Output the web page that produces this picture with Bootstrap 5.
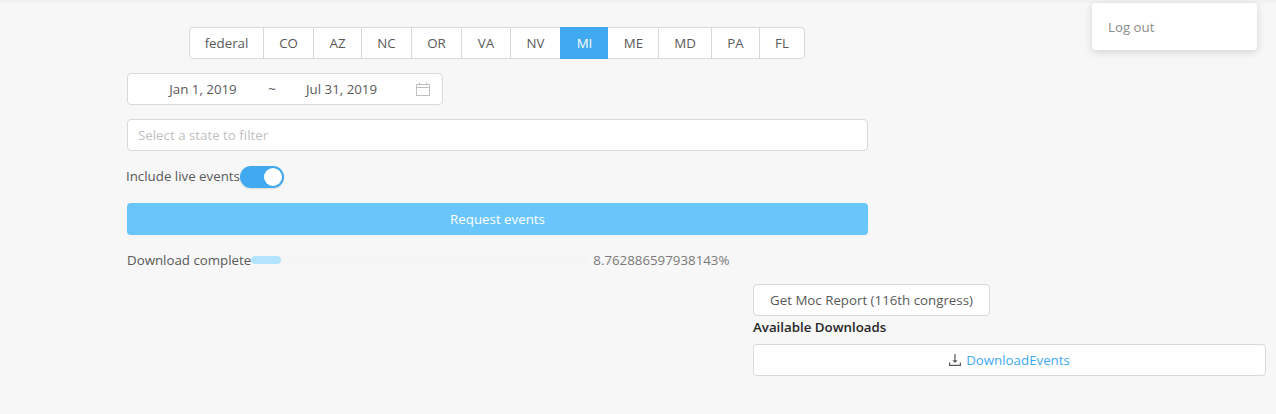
<!DOCTYPE html>
<html lang="en">
<head>
<meta charset="utf-8">
<title>Events</title>
<link rel="stylesheet" href="https://cdn.jsdelivr.net/npm/bootstrap@5.3.0/dist/css/bootstrap.min.css">
<style>
html,body{height:100%;}
body{background:#f7f7f7;font-family:"Open Sans","Noto Sans",sans-serif;font-size:13.3px;color:#595959;line-height:20px;overflow:hidden;}
.page-wrap{padding:27px 10px 0 127px;}
.left-col{width:741px;}
.state-group{margin-left:62px;display:inline-flex;height:32px;background:#fff;border:1px solid #d9d9d9;border-radius:4px;}
.state-item{display:flex;align-items:center;justify-content:center;border-left:1px solid #d9d9d9;color:#595959;text-decoration:none;}
.state-item:first-child{border-left:0;}
.state-item.on{background:#40a9f0;color:#fff;border-left-color:#40a9f0;margin:-1px 0;}
.state-item.on + .state-item{border-left-color:transparent;}
.w-a{width:73px}.w-b{width:50px}.w-c{width:48px}.w-d{width:49px}.w-f{width:53px}.w-g{width:45px}
.date-box{width:316px;height:32px;margin-top:14px;background:#fff;border:1px solid #d9d9d9;border-radius:4px;padding:0 12px 0 40px;}
.date-val{width:70px;text-align:center;white-space:nowrap;}
.date-sep{width:68px;text-align:center;}
.filter-box{height:32px;margin-top:14px;background:#fff;border:1px solid #d9d9d9;border-radius:4px;padding:0 10px;color:#bfbfbf;}
.toggle-line{margin-top:14px;height:24px;margin-left:-1px;}
.toggle-track{width:44px;height:22px;border-radius:11px;background:#40a9f0;position:relative;box-shadow:0 1px 2px rgba(0,0,0,.12);}
.toggle-knob{position:absolute;right:2px;top:2px;width:18px;height:18px;border-radius:50%;background:#fff;}
.toggle-label{position:relative;top:-1px;}
.request-btn{margin-top:14px;height:32px;width:100%;background:#69c6fc;border:0;border-radius:4px;color:#fff;font-size:13.3px;padding:0;box-shadow:0 2px 0 rgba(0,0,0,.02);}
.progress-line{margin-top:15px;height:20px;}
.track-bar{width:336px;height:8px;background:#f5f5f5;border-radius:4px;overflow:hidden;}
.track-fill{height:8px;background:#b3e3fd;border-radius:4px;}
.pct-text{margin-left:6px;color:#7a7a7a;}
.bottom-col{margin-left:626px;margin-top:14px;width:513px;}
.moc-btn{width:237px;height:32px;background:#fff;border:1px solid #d9d9d9;border-radius:4px;color:#595959;font-size:13.3px;padding:0;}
.avail-title{font-weight:600;color:#262626;margin-top:1px;height:20px;margin-bottom:7px;}
.dl-box{height:32px;background:#fff;border:1px solid #d9d9d9;border-radius:4px;color:#40a9f0;text-decoration:none;}
.dl-box svg{margin-right:5px;}
.logout-menu{position:absolute;left:1092px;top:3px;width:165px;height:47px;background:#fff;border-radius:4px;box-shadow:0 2px 8px rgba(0,0,0,.15);padding:14px 16px;color:#8c8c8c;}
.top-shade{position:absolute;left:0;top:0;right:0;height:3px;background:#f2f2f2;}
</style>
</head>
<body>
<div class="top-shade"></div>
<main class="page-wrap">
  <div class="left-col">
    <div class="state-group">
      <a class="state-item w-a" href="#">federal</a>
      <a class="state-item w-b" href="#">CO</a>
      <a class="state-item w-c" href="#">AZ</a>
      <a class="state-item w-b" href="#">NC</a>
      <a class="state-item w-b" href="#">OR</a>
      <a class="state-item w-d" href="#">VA</a>
      <a class="state-item w-b" href="#">NV</a>
      <a class="state-item w-c on" href="#">MI</a>
      <a class="state-item w-b" href="#">ME</a>
      <a class="state-item w-f" href="#">MD</a>
      <a class="state-item w-c" href="#">PA</a>
      <a class="state-item w-g" href="#">FL</a>
    </div>
    <div class="date-box d-flex align-items-center">
      <span class="date-val">Jan 1, 2019</span>
      <span class="date-sep">~</span>
      <span class="date-val">Jul 31, 2019</span>
      <svg class="ms-auto" width="14" height="14" viewBox="0 0 14 14" fill="none" stroke="#bfbfbf" stroke-width="1"><rect x=".5" y="2.5" width="13" height="11"/><path d="M.5 5.5h13M3.5 .5v3M10.5 .5v3"/></svg>
    </div>
    <div class="filter-box d-flex align-items-center">Select a state to filter</div>
    <div class="toggle-line d-flex align-items-center">
      <span class="toggle-label">Include live events</span>
      <span class="toggle-track"><span class="toggle-knob"></span></span>
    </div>
    <button class="request-btn" type="button">Request events</button>
    <div class="progress-line d-flex align-items-center">
      <span>Download complete</span>
      <div class="track-bar"><div class="track-fill" style="width:8.76%"></div></div>
      <span class="pct-text">8.762886597938143%</span>
    </div>
  </div>
  <div class="bottom-col">
    <button class="moc-btn" type="button">Get Moc Report (116th congress)</button>
    <div class="avail-title">Available Downloads</div>
    <a class="dl-box d-flex align-items-center justify-content-center" href="#">
      <svg width="12" height="12" viewBox="0 0 12 12"><path d="M5.4 0h1.2v6.2H8.5L6 9 3.5 6.2h1.9z" fill="#595959"/><path d="M.6 8.5v2.9h10.8V8.5" fill="none" stroke="#595959" stroke-width="1.2"/></svg>DownloadEvents
    </a>
  </div>
</main>
<div class="logout-menu">Log out</div>
</body>
</html>
